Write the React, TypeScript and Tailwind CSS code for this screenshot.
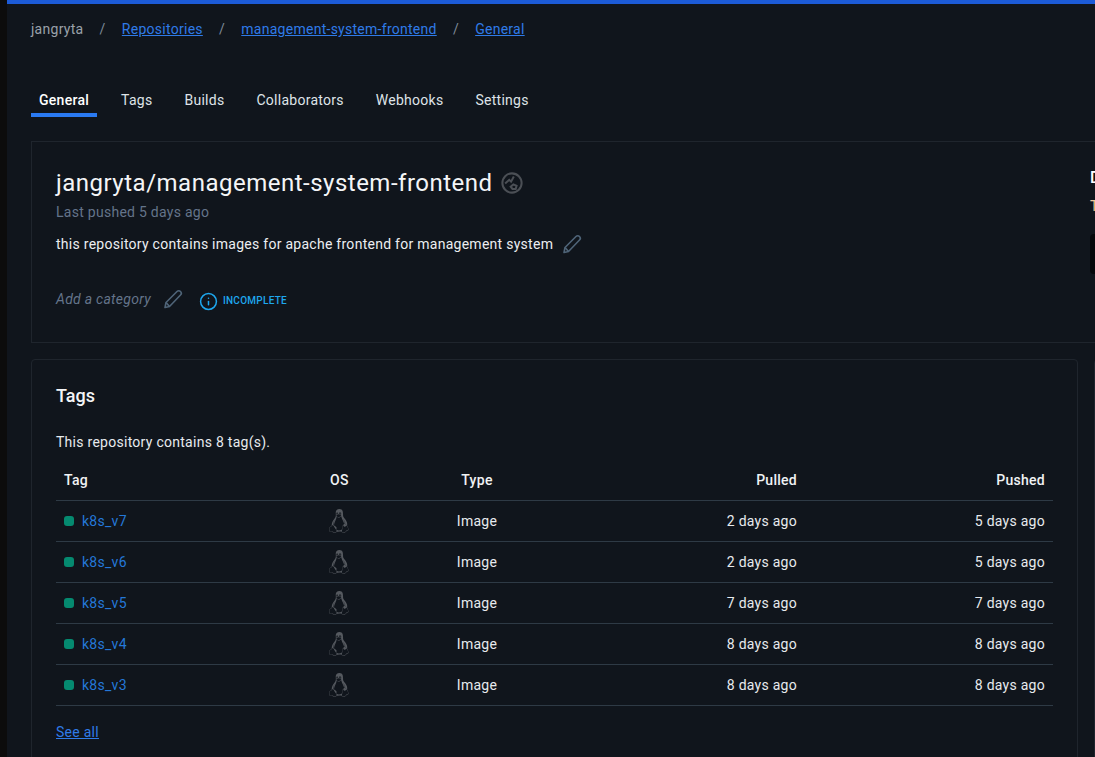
import { Info } from "lucide-react";
import { SiLinux } from "react-icons/si";

const tabs = ["General", "Tags", "Builds", "Collaborators", "Webhooks", "Settings"];

const rows = [
  { tag: "k8s_v7", pulled: "2 days ago", pushed: "5 days ago" },
  { tag: "k8s_v6", pulled: "2 days ago", pushed: "5 days ago" },
  { tag: "k8s_v5", pulled: "7 days ago", pushed: "7 days ago" },
  { tag: "k8s_v4", pulled: "8 days ago", pushed: "8 days ago" },
  { tag: "k8s_v3", pulled: "8 days ago", pushed: "8 days ago" },
];

function PublicIcon() {
  return (
    <svg width="22" height="22" viewBox="0 0 24 24" fill="none" stroke="#4b4f55" strokeWidth="2.2" className="shrink-0">
      <circle cx="12" cy="12" r="10.5" />
      <path d="M4.5 12.5 L9 8.5 L11 10.5 L14 5" />
      <path d="M10.5 16 L13.5 13.5 L17 15 L16 18.5 L12.5 18.5 Z" />
    </svg>
  );
}

function EditIcon() {
  return (
    <svg width="20" height="20" viewBox="0 0 20 20" fill="none" stroke="#4f6478" strokeWidth="1.6" strokeLinejoin="round" className="shrink-0">
      <path d="M2 18.5 L3 13.5 L14 2.5 C15 1.5 16.5 1.5 17.5 2.5 C18.5 3.5 18.5 5 17.5 6 L6.5 17.5 Z" />
      <path d="M3 13.5 L6.5 17.5" />
    </svg>
  );
}

export default function App() {
  return (
    <div className="h-[757px] w-[1095px] overflow-hidden flex bg-[#10151c] font-['Roboto',sans-serif] text-sm tracking-[0.27px] text-[#e7eaee]">
      <div className="w-[7px] shrink-0 bg-[#0c0c0c]" />
      <div className="flex-1 min-w-0">
        <div className="h-1 bg-[#1c5bd8]" />

        {/* Breadcrumb */}
        <nav className="flex items-center h-[20px] mt-[15px] ml-6 leading-5 text-[#9aa1aa]">
          <span>jangryta</span>
          <span className="mx-[16.2px] text-[#7e8a98]">/</span>
          <a href="#" className="underline text-[#2f7be8]">Repositories</a>
          <span className="mx-[16.2px] text-[#7e8a98]">/</span>
          <a href="#" className="underline text-[#2f7be8]">management-system-frontend</a>
          <span className="mx-[16.2px] text-[#7e8a98]">/</span>
          <a href="#" className="underline text-[#2f7be8]">General</a>
        </nav>

        {/* Tabs */}
        <div className="flex mt-[37px] ml-6 h-[42px]">
          {tabs.map((t, i) => (
            <div
              key={t}
              className={
                i === 0
                  ? "px-2 pt-[14px] h-[41px] mr-4 border-b-4 border-[#2a7af2] font-medium text-white"
                  : "px-2 pt-[14px] h-[41px] mr-4 text-[#dfe3e8]"
              }
            >
              {t}
            </div>
          ))}
        </div>

        {/* Repository card */}
        <section className="mt-[23px] ml-6 w-[1100px] h-[202px] border border-[#1f252d] flex">
          <div className="w-[1058px] shrink-0 pl-6 pt-[25px]">
            <div className="flex items-center h-[32px] gap-2">
              <h1 className="text-2xl leading-8 tracking-[0.5px] text-[#f4f5f7]">jangryta/management-system-frontend</h1>
              <PublicIcon />
            </div>
            <p className="mt-[3px] leading-5 text-[#64748a]">Last pushed 5 days ago</p>
            <div className="flex items-center mt-3 h-5 gap-[9px]">
              <p className="leading-5 text-[#eceef1]">this repository contains images for apache frontend for management system</p>
              <EditIcon />
            </div>
            <div className="flex items-center mt-[35px] h-5">
              <span className="italic text-[#64748a]">Add a category</span>
              <span className="ml-3">
                <EditIcon />
              </span>
              <div className="flex items-center ml-4 pt-1">
                <Info size={19} strokeWidth={1.9} color="#1ea7ee" />
                <span className="ml-[5px] text-[10px] font-medium text-[#1ea7ee]">INCOMPLETE</span>
              </div>
            </div>
          </div>
          <div className="pt-[26px]">
            <div className="text-base leading-5 font-medium text-white">Docker commands</div>
            <div className="mt-2 leading-5 text-[#f0c89a]">To push a new tag</div>
            <div className="mt-[18px] h-[40px] w-[400px] rounded bg-[#06080b]" />
          </div>
        </section>

        {/* Tags card + next card */}
        <div className="flex mt-4 ml-6 gap-4">
          <section className="w-[1047px] shrink-0 h-[420px] border border-[#1f252d] rounded-sm px-6 pt-6">
            <h2 className="text-lg leading-6 tracking-normal font-medium text-[#f4f5f7]">Tags</h2>
            <p className="mt-6 leading-5 text-[#e7eaee]">This repository contains 8 tag(s).</p>

            <table className="mt-2 w-[997px] table-fixed border-collapse">
              <thead>
                <tr className="h-[40px] border-b border-[#2e3a45] font-medium text-[#f0f2f4]">
                  <th className="w-[266px] pl-2 text-left font-medium">Tag</th>
                  <th className="w-[90px] text-left pl-[8px] font-medium">OS</th>
                  <th className="w-[130px] text-center font-medium">Type</th>
                  <th className="w-[263px] text-right pr-2 font-medium">Pulled</th>
                  <th className="text-right pr-2 font-medium">Pushed</th>
                </tr>
              </thead>
              <tbody>
                {rows.map((r) => (
                  <tr key={r.tag} className="h-[41px] border-b border-[#2e3a45]">
                    <td className="pl-2">
                      <div className="flex items-center gap-2">
                        <span className="size-[10px] rounded-[3px] bg-[#058a70]" />
                        <a href="#" className="text-[#2478d8]">{r.tag}</a>
                      </div>
                    </td>
                    <td className="pl-[5px]">
                      <SiLinux size={24} color="#55595f" />
                    </td>
                    <td className="text-center">Image</td>
                    <td className="text-right pr-2">{r.pulled}</td>
                    <td className="text-right pr-2">{r.pushed}</td>
                  </tr>
                ))}
              </tbody>
            </table>

            <a href="#" className="block mt-[16px] leading-5 underline text-[#2f7be8]">See all</a>
          </section>
          <section className="w-[300px] shrink-0 h-[420px] border border-[#1f252d] rounded-sm" />
        </div>
      </div>
    </div>
  );
}
